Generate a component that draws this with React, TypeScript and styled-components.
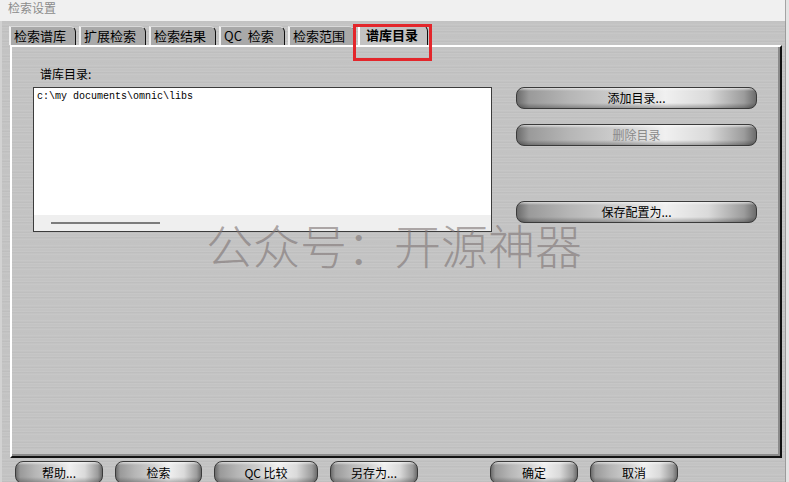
import React from "react";
import styled, { createGlobalStyle, css } from "styled-components";

const GlobalStyle = createGlobalStyle`
  html, body { margin: 0; padding: 0; background: #e8e8e8; }
  body {
    width: 789px; height: 482px; overflow: hidden;
    font-family: "Noto Sans CJK SC", "Noto Sans", sans-serif;
  }
`;

const metal = css`
  background-color: #c3c3c3;
  background-image:
    repeating-linear-gradient(180deg, rgba(255,255,255,0.06) 0px, rgba(255,255,255,0.06) 1px, transparent 1px, transparent 3px),
    repeating-linear-gradient(180deg, rgba(0,0,0,0.025) 0px, rgba(0,0,0,0.025) 1px, transparent 1px, transparent 5px);
`;

const Window = styled.div`
  position: relative;
  width: 789px;
  height: 482px;
  overflow: hidden;
  display: flex;
  flex-direction: column;
  background: #e4e4e4;
`;

const TitleBar = styled.div`
  height: 21px;
  flex: none;
  box-sizing: border-box;
  margin-right: 3px;
  border-right: 1px solid #a4a4a4;
  background: #f0f0f0;
  color: #8c8c8c;
  font-size: 12px;
  line-height: 16px;
  padding-left: 8px;
`;

const Main = styled.div`
  ${metal};
  flex: 1;
  margin-right: 3px;
  border-left: 2px solid #d2d2d2;
  border-right: 1px solid #9c9c9c;
  padding: 4px 0 0 7px;
  display: flex;
  flex-direction: column;
`;

const TabRow = styled.div`
  display: flex;
  align-items: flex-end;
  gap: 3px;
  height: 20px;
`;

const Tab = styled.div<{ $w: number; $active?: boolean }>`
  box-sizing: border-box;
  width: ${(p) => p.$w}px;
  height: ${(p) => (p.$active ? 20 : 19)}px;
  background: ${(p) => (p.$active ? "#c3c3c3" : "#a9a9a9")};
  border-left: 2px solid ${(p) => (p.$active ? "#ffffff" : "#f0f0f0")};
  border-top: 1px solid #dadada;
  border-right: 1px solid #111;
  border-top-right-radius: 6px;
  font-size: 13px;
  line-height: 17px;
  font-weight: ${(p) => (p.$active ? 700 : 400)};
  padding-left: ${(p) => (p.$active ? 6 : 3)}px;
  color: #000;
  white-space: pre;
`;

const Panel = styled.div`
  ${metal};
  box-sizing: border-box;
  margin-left: 1px;
  width: 772px;
  height: 413px;
  border-top: 2px solid #fff;
  border-left: 2px solid #fff;
  border-right: 2px solid #111;
  border-bottom: 2px solid #111;
  box-shadow: inset -2px -2px 0 #8a8a8a;
  padding: 19px 0 0 21px;
  display: grid;
  grid-template-columns: 459px 241px;
  column-gap: 24px;
  grid-template-rows: auto auto;
  align-content: start;
`;

const Label = styled.div`
  grid-column: 1 / span 2;
  font-size: 12px;
  line-height: 16px;
  margin: 0 0 5px 7px;
  color: #000;
`;

const ListBox = styled.div`
  box-sizing: border-box;
  width: 459px;
  height: 145px;
  border: 1px solid #3c3c3c;
  background: #fff;
  display: flex;
  flex-direction: column;
`;

const ListText = styled.div`
  flex: 1;
  font-family: "Liberation Mono", "DejaVu Sans Mono", monospace;
  font-size: 10px;
  line-height: 12px;
  padding: 3px 3px 0;
  color: #000;
`;

const HScroll = styled.div`
  height: 16px;
  background: #efefef;
  display: flex;
  align-items: center;
  padding-left: 17px;
`;

const ScrollLine = styled.div`
  width: 109px;
  height: 2px;
  background: #7c7c7c;
`;

const ButtonColumn = styled.div`
  display: flex;
  flex-direction: column;
  gap: 15px;
`;

const MetalButton = styled.button<{ $w?: number; $h?: number; $top?: number; $left?: number; $disabled?: boolean }>`
  box-sizing: border-box;
  width: ${(p) => (p.$w ? `${p.$w}px` : "100%")};
  height: ${(p) => p.$h ?? 22}px;
  margin-top: ${(p) => p.$top ?? 0}px;
  margin-left: ${(p) => p.$left ?? 0}px;
  flex: none;
  border: 1px solid #3a3a3a;
  border-radius: 8px;
  padding: 0;
  background:
    linear-gradient(180deg, rgba(255,255,255,0.6) 0px, rgba(255,255,255,0) 3px, rgba(0,0,0,0) 15px, rgba(0,0,0,0.28) 100%),
    linear-gradient(90deg, #6c6c6c 0%, #9a9a9a 5%, #b6b6b6 22%, #cdcdcd 42%, #f0f0f0 62%, #dadada 80%, #9c9c9c 95%, #6c6c6c 100%);
  font-family: "Noto Sans CJK SC", "Noto Sans", sans-serif;
  font-size: 12px;
  line-height: 14px;
  color: ${(p) => (p.$disabled ? "#8a8a8a" : "#000")};
  display: flex;
  align-items: center;
  justify-content: center;
  cursor: default;
`;

const Footer = styled.div`
  display: flex;
  gap: 12px;
  margin: 3px 0 0 6px;
`;

const Watermark = styled.div`
  position: absolute;
  left: 206px;
  top: 218px;
  font-family: "Noto Sans CJK SC", sans-serif;
  font-size: 47px;
  line-height: 52px;
  font-weight: 300;
  color: rgba(125, 115, 115, 0.62);
  white-space: nowrap;
  pointer-events: none;
`;

const Highlight = styled.div`
  position: absolute;
  left: 353px;
  top: 24px;
  width: 79px;
  height: 37px;
  box-sizing: border-box;
  border: 3px solid #e3262b;
  pointer-events: none;
`;

const tabs = [
  { label: "检索谱库", w: 67 },
  { label: "扩展检索", w: 67 },
  { label: "检索结果", w: 67 },
  { label: "QC  检索", w: 66 },
  { label: "检索范围", w: 67 },
  { label: "谱库目录", w: 70, active: true },
];

const footerButtons = [
  { label: "帮助...", w: 88 },
  { label: "检索", w: 87 },
  { label: "QC 比较", w: 104 },
  { label: "另存为...", w: 88 },
  { label: "确定", w: 88, left: 60 },
  { label: "取消", w: 88 },
];

export default function App() {
  return (
    <>
      <GlobalStyle />
      <Window>
        <TitleBar>检索设置</TitleBar>
        <Main>
          <TabRow>
            {tabs.map((t) => (
              <Tab key={t.label} $w={t.w} $active={t.active}>
                {t.label}
              </Tab>
            ))}
          </TabRow>
          <Panel>
            <Label>谱库目录:</Label>
            <ListBox>
              <ListText>c:\my documents\omnic\libs</ListText>
              <HScroll>
                <ScrollLine />
              </HScroll>
            </ListBox>
            <ButtonColumn>
              <MetalButton>添加目录...</MetalButton>
              <MetalButton $disabled>删除目录</MetalButton>
              <MetalButton $top={40}>保存配置为...</MetalButton>
            </ButtonColumn>
          </Panel>
          <Footer>
            {footerButtons.map((b) => (
              <MetalButton key={b.label} $w={b.w} $h={23} $left={b.left}>
                {b.label}
              </MetalButton>
            ))}
          </Footer>
        </Main>
        <Highlight />
        <Watermark>公众号：开源神器</Watermark>
      </Window>
    </>
  );
}
